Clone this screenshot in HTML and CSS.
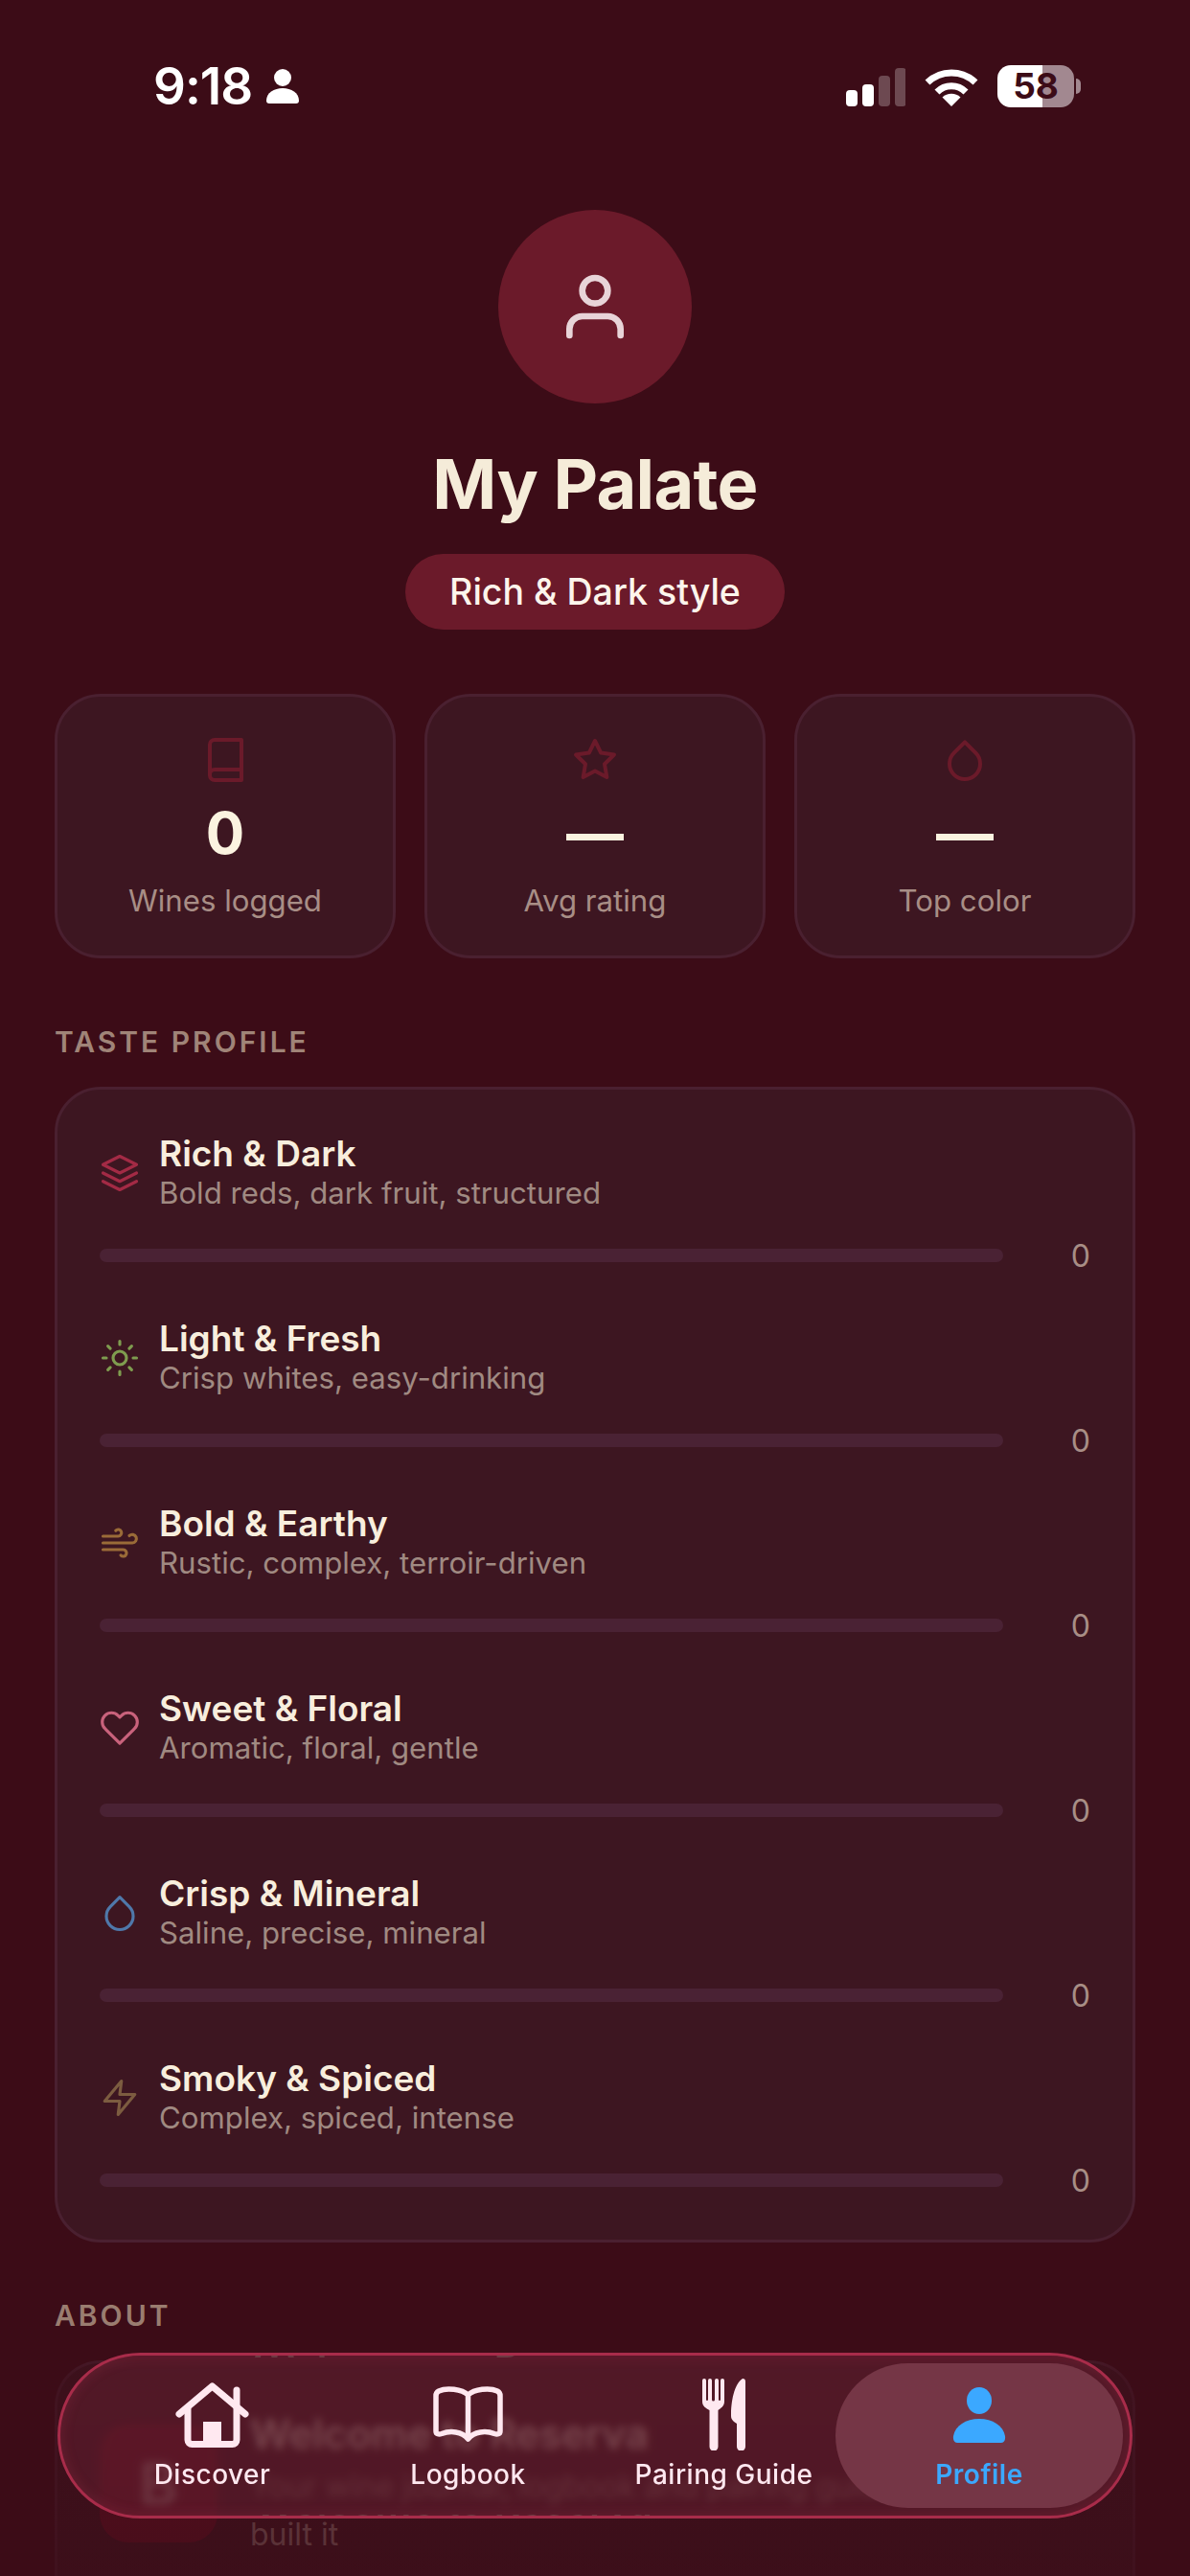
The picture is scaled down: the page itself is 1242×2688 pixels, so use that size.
FILE: index.html
```html
<!DOCTYPE html>
<html>
  <head>
    <meta charset="utf-8" />
    <title>Reserva - My Palate</title>
    <link rel="stylesheet" href="styles.css">
  </head>

  <body>
    <div id="status_bar">
      <div class="status_left">
        <span class="clock">9:18</span>
        <svg class="status_person" viewBox="0 0 34 36"><circle cx="17" cy="9" r="9"/><path d="M0 33c0-8 8-13 17-13s17 5 17 13c0 2-1 3-3 3H3c-2 0-3-1-3-3z"/></svg>
      </div>
      <div class="status_right">
        <svg class="signal" viewBox="0 0 62 40">
          <rect x="0" y="23" width="12" height="17" rx="4"/>
          <rect x="17" y="17" width="12" height="23" rx="4"/>
          <rect class="dim" x="34" y="8" width="12" height="32" rx="4"/>
          <rect class="dim" x="51" y="0" width="12" height="40" rx="4"/>
        </svg>
        <svg class="wifi" viewBox="0 0 56 40">
          <path class="arc" d="M3 15A36 36 0 0 1 53 15"/>
          <path class="arc" d="M13 25A21 21 0 0 1 43 25"/>
          <path d="M28 40L18.500 30.500A14 14 0 0 1 37.500 30.500Z"/>
        </svg>
        <div class="battery">
          <div class="battery_body">58</div>
          <div class="battery_cap"></div>
        </div>
      </div>
    </div>

    <div id="header">
      <div class="avatar">
        <svg class="icon avatar_icon" viewBox="0 0 24 24"><path d="M20 21v-2a4 4 0 0 0-4-4H8a4 4 0 0 0-4 4v2"/><circle cx="12" cy="7" r="4"/></svg>
      </div>
      <h1>My Palate</h1>
      <div class="style_pill">Rich &amp; Dark style</div>
    </div>

    <div id="stats">
      <div class="stat_card">
        <svg class="icon stat_icon" viewBox="0 0 24 24"><path d="M4 19.500A2.500 2.500 0 0 1 6.500 17H20.500"/><path d="M6.500 1.500H20.500V22.500H6.500A2.500 2.500 0 0 1 4 20V4A2.500 2.500 0 0 1 6.500 1.500z"/></svg>
        <div class="stat_value">0</div>
        <div class="stat_label">Wines logged</div>
      </div>
      <div class="stat_card">
        <svg class="icon stat_icon" viewBox="0 0 24 24"><polygon points="12 2 15.090 8.260 22 9.270 17 14.140 18.180 21.020 12 17.770 5.820 21.020 7 14.140 2 9.270 8.910 8.260 12 2"/></svg>
        <div class="stat_value">—</div>
        <div class="stat_label">Avg rating</div>
      </div>
      <div class="stat_card">
        <svg class="icon stat_icon" viewBox="0 0 24 24"><path d="M12 2.690l5.660 5.660a8 8 0 1 1-11.310 0z"/></svg>
        <div class="stat_value">—</div>
        <div class="stat_label">Top color</div>
      </div>
    </div>

    <div class="section_label">TASTE PROFILE</div>
    <div id="taste_card">
      <div class="taste_row">
        <div class="taste_head">
          <svg class="icon taste_icon rich" viewBox="0 0 24 24"><polygon points="12 2 2 7 12 12 22 7 12 2"/><polyline points="2 17 12 22 22 17"/><polyline points="2 12 12 17 22 12"/></svg>
          <div class="taste_text">
            <div class="taste_name">Rich &amp; Dark</div>
            <div class="taste_desc">Bold reds, dark fruit, structured</div>
          </div>
        </div>
        <div class="taste_bar"><div class="track"></div><div class="count">0</div></div>
      </div>
      <div class="taste_row">
        <div class="taste_head">
          <svg class="icon taste_icon light" viewBox="0 0 24 24"><circle cx="12" cy="12" r="4"/><path d="M12 2v2M12 20v2M4.930 4.930l1.410 1.410M17.660 17.660l1.410 1.410M2 12h2M20 12h2M6.340 17.660l-1.410 1.410M19.070 4.930l-1.410 1.410"/></svg>
          <div class="taste_text">
            <div class="taste_name">Light &amp; Fresh</div>
            <div class="taste_desc">Crisp whites, easy-drinking</div>
          </div>
        </div>
        <div class="taste_bar"><div class="track"></div><div class="count">0</div></div>
      </div>
      <div class="taste_row">
        <div class="taste_head">
          <svg class="icon taste_icon earthy" viewBox="0 0 24 24"><path d="M17.700 7.700a2.500 2.500 0 1 1 1.800 4.300H2"/><path d="M9.600 4.600A2 2 0 1 1 11 8H2"/><path d="M12.600 19.400A2 2 0 1 0 14 16H2"/></svg>
          <div class="taste_text">
            <div class="taste_name">Bold &amp; Earthy</div>
            <div class="taste_desc">Rustic, complex, terroir-driven</div>
          </div>
        </div>
        <div class="taste_bar"><div class="track"></div><div class="count">0</div></div>
      </div>
      <div class="taste_row">
        <div class="taste_head">
          <svg class="icon taste_icon floral" viewBox="0 0 24 24"><path d="M20.840 4.610a5.500 5.500 0 0 0-7.780 0L12 5.670l-1.060-1.060a5.500 5.500 0 0 0-7.780 7.780l1.060 1.060L12 21.230l7.780-7.780 1.060-1.060a5.500 5.500 0 0 0 0-7.780z"/></svg>
          <div class="taste_text">
            <div class="taste_name">Sweet &amp; Floral</div>
            <div class="taste_desc">Aromatic, floral, gentle</div>
          </div>
        </div>
        <div class="taste_bar"><div class="track"></div><div class="count">0</div></div>
      </div>
      <div class="taste_row">
        <div class="taste_head">
          <svg class="icon taste_icon mineral" viewBox="0 0 24 24"><path d="M12 2.690l5.660 5.660a8 8 0 1 1-11.310 0z"/></svg>
          <div class="taste_text">
            <div class="taste_name">Crisp &amp; Mineral</div>
            <div class="taste_desc">Saline, precise, mineral</div>
          </div>
        </div>
        <div class="taste_bar"><div class="track"></div><div class="count">0</div></div>
      </div>
      <div class="taste_row">
        <div class="taste_head">
          <svg class="icon taste_icon smoky" viewBox="0 0 24 24"><polygon points="13 2 3 14 12 14 11 22 21 10 12 10 13 2"/></svg>
          <div class="taste_text">
            <div class="taste_name">Smoky &amp; Spiced</div>
            <div class="taste_desc">Complex, spiced, intense</div>
          </div>
        </div>
        <div class="taste_bar"><div class="track"></div><div class="count">0</div></div>
      </div>
    </div>

    <div class="section_label about_label">ABOUT</div>
    <div id="about_card">
      <div class="about_logo">B</div>
      <div class="about_text">
        <div class="about_title">Welcome to Reserva</div>
        <div class="about_desc">Your wine journal, logbook and pairing guide, and how we<br>built it</div>
      </div>
    </div>

    <div id="bottom_fade"></div>

    <div id="tab_bar">
      <div class="mirror mirror_top">Welcome to Reserva</div>
      <div class="mirror mirror_bottom">Welcome to Reserva</div>

      <div class="tab">
        <div class="tab_icon">
          <svg class="house" viewBox="0 0 77 68">
            <path class="line" d="M4 33L38.500 4L73 33"/>
            <path class="line" d="M64 24V8"/>
            <path class="line" d="M13 27V60a4.500 4.500 0 0 0 4.500 4.500H59.500a4.500 4.500 0 0 0 4.500-4.500V27"/>
            <rect x="29" y="41" width="19" height="24"/>
          </svg>
        </div>
        <div class="tab_label">Discover</div>
      </div>

      <div class="tab">
        <div class="tab_icon">
          <svg class="open_book" viewBox="0 0 73 59">
            <path class="line" d="M36.500 9C30 3 14 1 6 5Q3 6.500 3 10V47C3 50 6 50.500 9 49.500C18 46 30 47 36.500 55C43 47 55 46 64 49.500C67 50.500 70 50 70 47V10Q70 6.500 67 5C59 1 43 3 36.500 9V50"/>
          </svg>
        </div>
        <div class="tab_label">Logbook</div>
      </div>

      <div class="tab">
        <div class="tab_icon">
          <svg class="cutlery" viewBox="0 0 45 75">
            <path d="M0 2a2 2 0 0 1 4 0V22a1 1 0 0 0 2 0V2a2 2 0 0 1 4 0V22a1 1 0 0 0 3 0V2a2 2 0 0 1 4 0V22a1 1 0 0 0 2 0V2a2 2 0 0 1 4 0V24C23 29 19 31 16.500 33V71a4.500 4.500 0 0 1-9 0V33C4 31 0 29 0 24z"/>
            <path d="M42 0C44 0 45 1 45 3V71a4.500 4.500 0 0 1-9 0V47C33 45 30 43 30 39C30 24 33 6 42 0z"/>
          </svg>
        </div>
        <div class="tab_label">Pairing Guide</div>
      </div>

      <div class="tab active">
        <div class="tab_icon">
          <svg class="person" viewBox="0 0 56 58"><ellipse cx="28" cy="14" rx="13" ry="14"/><path d="M1 51C3 40 14 33 28 33S53 40 55 51C55.500 55 54 58 51 58H5C2 58 0.500 55 1 51z"/></svg>
        </div>
        <div class="tab_label">Profile</div>
      </div>
    </div>
  </body>
</html>
```

FILE: styles.css
```css
html, body
{
  margin: 0;
  padding: 0;
  width: 1242px;
  height: 2688px;
  overflow: hidden;
  background-color: #3c0c17;
  font-family: Inter, "Liberation Sans", sans-serif;
  color: #f5ecd9;
}
body
{
  position: relative;
}
.icon
{
  display: block;
  fill: none;
  stroke: currentColor;
  stroke-width: 2;
  stroke-linecap: round;
  stroke-linejoin: round;
}

/* status bar ============================================ */
#status_bar
{
  display: flex;
  justify-content: space-between;
  align-items: center;
  height: 44px;
  padding: 68px 114px 0 160px;
  color: #fff;
}
.status_left
{
  display: flex;
  align-items: center;
  gap: 15px;
}
.clock
{
  font-size: 53px;
  font-weight: 600;
  line-height: 44px;
  letter-spacing: -1px;
}
.status_person
{
  width: 34px;
  height: 36px;
  fill: #fff;
}
.status_right
{
  display: flex;
  align-items: center;
  gap: 20px;
}
.signal
{
  width: 62px;
  height: 40px;
  fill: #fff;
  margin-top: 2px;
}
.signal .dim
{
  fill: #ffffff;
  opacity: 0.25;
}
.wifi
{
  width: 56px;
  height: 40px;
  fill: #fff;
  margin-top: 2px;
}
.wifi .arc
{
  fill: none;
  stroke: #fff;
  stroke-width: 7;
}
.battery
{
  display: flex;
  align-items: center;
  gap: 2px;
}
.battery_body
{
  width: 80px;
  height: 44px;
  border-radius: 14px;
  background: linear-gradient(90deg, #fff 59%, #a28890 59%);
  color: #3c0c17;
  font-size: 37px;
  font-weight: 700;
  line-height: 44px;
  text-align: center;
}
.battery_cap
{
  width: 5px;
  height: 16px;
  border-radius: 0 8px 8px 0;
  background-color: #a28890;
}

/* header ================================================ */
#header
{
  display: flex;
  flex-direction: column;
  align-items: center;
  margin-top: 107px;
}
.avatar
{
  display: flex;
  justify-content: center;
  align-items: center;
  width: 202px;
  height: 202px;
  border-radius: 50%;
  background-color: #6b1a2a;
  color: #e8d4d8;
}
.avatar_icon
{
  width: 80px;
  height: 80px;
}
h1
{
  margin: 44px 0 0 0;
  font-size: 72px;
  font-weight: 700;
  line-height: 80px;
  letter-spacing: -0.700px;
  color: #f5ecd9;
}
.style_pill
{
  margin-top: 33px;
  padding: 0 46px;
  height: 79px;
  border-radius: 40px;
  background-color: #6b1a2a;
  color: #fdf5ec;
  font-size: 37.500px;
  font-weight: 500;
  line-height: 79px;
}

/* stats ================================================= */
#stats
{
  display: flex;
  gap: 30px;
  margin: 67px 57px 69px 57px;
}
.stat_card
{
  display: flex;
  flex-direction: column;
  align-items: center;
  box-sizing: border-box;
  width: 356px;
  height: 276px;
  padding-top: 42px;
  border: 3px solid #4a2030;
  border-radius: 48px;
  background-color: #3d1621;
}
.stat_icon
{
  width: 48px;
  height: 48px;
  color: #6b1a2a;
}
.stat_value
{
  margin-top: 16px;
  font-size: 60px;
  font-weight: 700;
  line-height: 72px;
  color: #fbf3e0;
}
.stat_label
{
  margin-top: 15px;
  font-size: 31.200px;
  line-height: 40px;
  color: #a88e86;
}

/* taste profile ========================================= */
.section_label
{
  margin: 0 57px 29px 57px;
  font-size: 30px;
  font-weight: 600;
  line-height: 36px;
  letter-spacing: 3px;
  color: #a08478;
}
#taste_card
{
  display: flex;
  flex-direction: column;
  gap: 45px;
  box-sizing: border-box;
  height: 1206px;
  margin: 0 57px 58px 57px;
  padding: 45px 44px;
  border: 3px solid #4a2030;
  border-radius: 48px;
  background-color: #3d1621;
}
.taste_head
{
  display: flex;
  align-items: center;
  gap: 20px;
  height: 84px;
}
.taste_icon
{
  width: 42px;
  height: 42px;
  stroke-width: 1.800;
}
.rich { color: #a32a45; }
.light { color: #7f9c4f; }
.earthy { color: #9a6b38; }
.floral { color: #c9627c; }
.mineral { color: #4f78aa; }
.smoky { color: #7c5c40; }
.taste_name
{
  font-size: 37px;
  font-weight: 600;
  line-height: 43px;
  color: #f8eedd;
}
.taste_desc
{
  font-size: 31.200px;
  line-height: 41px;
  color: #a08a82;
}
.taste_bar
{
  display: flex;
  align-items: center;
  gap: 67px;
  height: 40px;
  margin-top: 24px;
}
.track
{
  flex: 1;
  height: 14px;
  border-radius: 7px;
  background-color: #4a2234;
}
.count
{
  width: 24px;
  font-size: 32px;
  text-align: right;
  color: #a88e86;
}

/* about ================================================= */
.about_label
{
  color: #9a7d70;
}
#about_card
{
  display: flex;
  gap: 34px;
  box-sizing: border-box;
  height: 225px;
  margin: 0 57px;
  padding: 44px 44px 0 44px;
  border: 3px solid #4a2030;
  border-bottom: none;
  border-radius: 48px 48px 0 0;
  background-color: #3d1621;
}
.about_logo
{
  flex: none;
  width: 123px;
  height: 123px;
  margin-top: 20px;
  border-radius: 30px;
  background-color: #6b1024;
  color: #c09a9a;
  font-size: 62px;
  font-weight: 700;
  line-height: 123px;
  text-align: center;
}
.about_title
{
  margin-top: 4px;
  font-size: 42px;
  font-weight: 600;
  line-height: 52px;
  color: #f5ecd9;
}
.about_desc
{
  margin-top: 4px;
  font-size: 32px;
  line-height: 50px;
  white-space: nowrap;
  color: #a08a82;
}
#bottom_fade
{
  position: absolute;
  left: 0;
  right: 0;
  top: 2430px;
  height: 258px;
  background: linear-gradient(180deg, rgba(60, 12, 23, 0) 0, rgba(60, 12, 23, 0.6) 50px, rgba(60, 12, 23, 0.72) 100%);
}

/* tab bar =============================================== */
#tab_bar
{
  position: absolute;
  left: 60px;
  top: 2455px;
  display: flex;
  align-items: center;
  box-sizing: border-box;
  width: 1122px;
  height: 173px;
  padding-left: 25px;
  overflow: hidden;
  border: 3px solid #a82c4a;
  border-radius: 87px;
  background-color: rgba(112, 36, 56, 0.42);
  box-shadow: inset 0 0 14px rgba(190, 60, 90, 0.22);
  backdrop-filter: blur(4px);
  color: #ffe8f0;
}
.mirror
{
  position: absolute;
  left: 202px;
  font-size: 42px;
  font-weight: 600;
  line-height: 52px;
  color: #6c3a42;
  transform: scaleY(-1);
  filter: blur(0.6px);
}
.mirror_top
{
  top: -40px;
}
.mirror_bottom
{
  bottom: -40px;
}
.tab
{
  position: relative;
  display: flex;
  flex-direction: column;
  align-items: center;
  flex: none;
  width: 267px;
}
.tab_icon
{
  display: flex;
  justify-content: center;
  align-items: center;
  height: 76px;
}
.tab_label
{
  margin-top: 4px;
  font-size: 28px;
  font-weight: 500;
  line-height: 40px;
  letter-spacing: 0.500px;
}
.tab.active
{
  justify-content: center;
  width: 300px;
  height: 151px;
  margin-left: -17px;
  border-radius: 76px;
  background-color: #753646;
  color: #3ba8ff;
}
.tab.active .tab_label
{
  font-weight: 600;
}
.line
{
  fill: none;
  stroke: #ffe8f0;
  stroke-width: 7;
  stroke-linecap: round;
  stroke-linejoin: round;
}
.house
{
  width: 77px;
  height: 68px;
  fill: #ffe8f0;
}
.open_book
{
  width: 73px;
  height: 59px;
}
.open_book .line
{
  stroke-width: 5.500;
}
.cutlery
{
  width: 45px;
  height: 75px;
  fill: #ffe8f0;
}
.person
{
  width: 56px;
  height: 58px;
  fill: #3ba8ff;
}
```
